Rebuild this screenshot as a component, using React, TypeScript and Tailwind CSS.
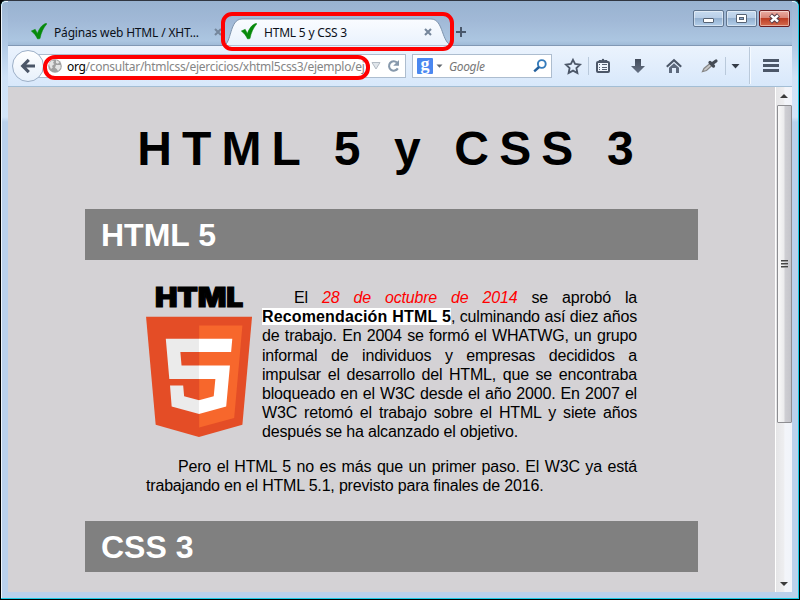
import React from "react";

function Check() {
  return (
    <svg width="16" height="17" viewBox="0 0 16 17" className="-mt-[1px] shrink-0">
      <path d="M0.3 8 L4.2 6.3 L6.4 10.4 C8.2 5.6 11 1.4 15.4 0.2 L15.8 0.9 C12.4 4.7 10.2 9.5 9 15.6 L6.6 16 C5 12.8 3 10 0.3 8Z" fill="#078a0b" stroke="#078a0b" strokeWidth="0.5" />
    </svg>
  );
}

function Cross() {
  return (
    <svg width="8" height="8" viewBox="0 0 8 8" className="shrink-0">
      <path d="M1 1L7 7M7 1L1 7" stroke="#75869b" strokeWidth="2.1" />
    </svg>
  );
}

function WindowButton({ kind }: { kind: "min" | "max" | "close" }) {
  const tone =
    kind === "close"
      ? "border-[#6b1c20] bg-[linear-gradient(#eaada4,#d88375_48%,#bd3d25_50%,#d56b4d)]"
      : "border-[#60758f] bg-[linear-gradient(#c7dbf0,#b7cde6_48%,#94b1d1_50%,#b4cfea)]";
  return (
    <div className={`flex h-[17px] w-[31px] items-center justify-center rounded-[2px] border shadow-[inset_0_0_0_1px_rgba(255,255,255,0.45)] ${tone}`}>
      <svg width="13" height="11" viewBox="0 0 13 11">
        {kind === "min" && <rect x="1.5" y="5.5" width="10" height="4" rx="0.5" fill="#fff" stroke="#566273" />}
        {kind === "max" && (
          <>
            <rect x="1.5" y="1.5" width="10" height="8" rx="0.5" fill="#fff" stroke="#566273" />
            <rect x="4.5" y="4.5" width="4" height="2" fill="#8aa6cb" stroke="#566273" />
          </>
        )}
        {kind === "close" && (
          <>
            <path d="M2.5 2L10.5 9M10.5 2L2.5 9" stroke="#563a45" strokeWidth="4.4" />
            <path d="M3 2.4L10 8.6M10 2.4L3 8.6" stroke="#fff" strokeWidth="2.6" />
          </>
        )}
      </svg>
    </div>
  );
}

function TitleBar() {
  return (
    <div className="flex h-[45px] shrink-0 items-start border-b border-[#8198b4] bg-[linear-gradient(#99b3d0,#a1b9d7_45%,#acc6e1_90%,#a0bbd8)] font-['Noto_Sans',sans-serif] text-[12px] text-[#0b1019]">
      <div className="ml-[23px] mt-[22px] flex h-[18px] w-[193px] items-center">
        <Check />
        <span className="ml-[7px] w-[160px] whitespace-nowrap pt-[2px] tracking-[-0.17px]">Páginas web HTML / XHT...</span>
        <Cross />
      </div>
      <div className="relative mt-[17px] h-[28px] w-[232px]">
        <svg className="absolute inset-0" width="232" height="28" viewBox="0 0 232 28">
          <defs>
            <linearGradient id="tab" x1="0" y1="0" x2="0" y2="1">
              <stop offset="0" stopColor="#fafcff" />
              <stop offset="1" stopColor="#e9f2fd" />
            </linearGradient>
          </defs>
          <path d="M-1 28C8 26 5 1 18 1H207C220 1 217 26 229 28Z" fill="url(#tab)" stroke="#7d93ad" />
        </svg>
        <div className="relative mt-[5px] flex h-[18px] items-center pl-[17px]">
          <Check />
          <span className="ml-[7px] w-[160px] whitespace-nowrap pt-[2px] tracking-[-0.2px]">HTML 5 y CSS 3</span>
          <Cross />
        </div>
      </div>
      <svg className="-ml-[1px] mt-[25px]" width="12" height="12" viewBox="0 0 12 12">
        <path d="M6 1V11M1 6H11" stroke="#49576b" strokeWidth="2" />
      </svg>
      <div className="ml-auto mr-[2px] mt-[9px] flex gap-[2px]">
        <WindowButton kind="min" />
        <WindowButton kind="max" />
        <WindowButton kind="close" />
      </div>
    </div>
  );
}

function UrlBox() {
  return (
    <div className="-ml-[6px] flex h-[24px] w-[368px] items-center border border-[#adbdcf] bg-white">
      <svg className="ml-[9px] shrink-0" width="14" height="14" viewBox="0 0 14 14">
        <circle cx="7" cy="7" r="6.8" fill="#a0a0a0" />
        <path d="M1 4L4 1.4L6 2L5 4L6.4 5L4 7L4.8 8.5L3 10L1.5 7Z M8 1L11.5 3L10 4.8L8 4Z M8 6L12.5 6L12.6 9L10 12L8.8 10L7 8.8Z" fill="#e4e4e4" />
      </svg>
      <span className="ml-[5px] w-[300px] shrink-0 whitespace-nowrap pt-[2px] font-['Noto_Sans',sans-serif] text-[12px] tracking-[-0.29px] text-[#858585]">
        <span className="text-black">org</span>/consultar/htmlcss/ejercicios/xhtml5css3/ejemplo/ej
      </span>
      <svg className="ml-[4px] shrink-0" width="34" height="22" viewBox="0 0 34 22">
        <path d="M1 7.5H9L5 14Z" fill="#e0e5ea" stroke="#b3bbc4" />
        <path d="M26 7.6A4.7 4.7 0 1 0 26.8 13.4" fill="none" stroke="#8799ac" strokeWidth="2.1" />
        <path d="M28 5V10.8H22.2Z" fill="#8799ac" />
      </svg>
    </div>
  );
}

function SearchBox() {
  return (
    <div className="ml-[6px] flex h-[24px] w-[140px] items-center border border-[#adbdcf] bg-white">
      <div className="ml-[4px] flex h-[16px] w-[16px] items-center justify-center rounded-[1px] bg-[#4a87f0] pb-[4px] font-['Liberation_Serif',serif] text-[18px] font-bold leading-none text-white">g</div>
      <svg className="ml-[3px]" width="7" height="4" viewBox="0 0 7 4"><path d="M0.5 0.5H6.5L3.5 3.8Z" fill="#60676f" /></svg>
      <span className="ml-[6px] pt-[2px] font-['Noto_Sans',sans-serif] text-[12px] italic tracking-[-0.35px] text-[#777]">Google</span>
      <svg className="ml-auto mr-[4px]" width="14" height="14" viewBox="0 0 14 14">
        <circle cx="8.8" cy="5" r="3.9" fill="none" stroke="#347bbb" strokeWidth="1.9" />
        <path d="M6 8L1.2 12.4" stroke="#225f9c" strokeWidth="2.4" />
      </svg>
    </div>
  );
}

function ToolIcons() {
  return (
    <svg className="ml-[10px] shrink-0" width="230" height="40" viewBox="562 46 230 40">
      <defs>
        <linearGradient id="ic" x1="0" y1="0" x2="0" y2="1">
          <stop offset="0" stopColor="#434d5c" />
          <stop offset="1" stopColor="#657184" />
        </linearGradient>
      </defs>
      <path d="M573 59.8L575.1 64L580 64.6L576.4 68L577.4 73L573 70.6L568.6 73L569.6 68L566 64.6L570.9 64Z" fill="none" stroke="#4c5768" strokeWidth="1.8" />
      <path d="M588.5 57V75M725.5 57V75" stroke="#b9c9db" />
      <path d="M749.5 47V84" stroke="#bac9da" />
      <path d="M750.5 47V84" stroke="#f5faff" />
      <rect x="597" y="62" width="12" height="10" rx="1" fill="#eef4fc" stroke="#4c5768" strokeWidth="2" />
      <path d="M599 62V60.5H601.5L603 58.9L604.5 60.5H607V62Z" fill="#4c5768" stroke="#4c5768" />
      <path d="M599 64.5H600M602 64.5H607M599 67.5H600M602 67.5H607M599 69.5H600M602 69.5H607" stroke="#566172" strokeWidth="1" />
      <path d="M635 59H641V66H645L638 73L631 66H635Z" fill="url(#ic)" />
      <path d="M666.8 66.8L674 60.2L681.2 66.8" fill="none" stroke="#4c5768" strokeWidth="2.1" />
      <path d="M669 67.8L674 63.3L679 67.8V73H676V68H672V73H669Z" fill="#5d697c" />
      <path d="M702.5 71.5L704 68.5L710.5 63L712.5 65L706.5 70.5Z" fill="#c8c8c8" stroke="#858585" strokeWidth="1.2" />
      <path d="M710 62.5L713.5 66M712.5 63.5L716 61" stroke="#454b55" strokeWidth="3.2" strokeLinecap="round" />
      <path d="M731.5 64H739.5L735.5 68.5Z" fill="#343c48" />
      <path d="M763 60.5H779M763 65.5H779M763 70.5H779" stroke="#4c5768" strokeWidth="2.8" />
    </svg>
  );
}

function Toolbar() {
  return (
    <div className="flex h-[41px] shrink-0 items-center overflow-hidden border-b border-[#a3bed5] bg-gradient-to-b from-[#ebf3fd] to-[#d8e8fb]">
      <div className="z-10 ml-[4px] flex h-[32px] w-[32px] shrink-0 items-center justify-center rounded-full border border-[#9db0c8] bg-gradient-to-b from-white to-[#e7f0fb]">
        <svg width="16" height="16" viewBox="0 0 16 16">
          <path d="M15 8H3.5M8.8 1.9L2.7 8L8.8 14.1" fill="none" stroke="#4b5667" strokeWidth="3.1" />
        </svg>
      </div>
      <UrlBox />
      <SearchBox />
      <ToolIcons />
    </div>
  );
}

function Html5Logo() {
  return (
    <svg width="106" height="152" viewBox="0 0 106 152" className="shrink-0 overflow-visible">
      <text x="9" y="21.5" textLength="88" lengthAdjust="spacingAndGlyphs" fontFamily="Inter, sans-serif" fontWeight="900" fontSize="26.5" stroke="#000" strokeWidth="1.1">HTML</text>
      <g transform="translate(-7 31.7) scale(0.235)">
        <path d="M71 460L30 0H481L440 460L255 512Z" fill="#e44d26" />
        <path d="M256 472L405 431L440 37H256Z" fill="#f7672c" />
        <path d="M256 208H181L176 150H256V94H114L129 265H256ZM256 355L192 338L188 293H132L139 382L256 414Z" fill="#ebebeb" />
        <path d="M255 208V265H325L318 338L255 355V414L371 382L387 208ZM255 94V150H392L397 94Z" fill="#fff" />
      </g>
    </svg>
  );
}

const introLines = [
  "de trabajo. En 2004 se formó el WHATWG, un grupo",
  "informal de individuos y empresas decididos a",
  "impulsar el desarrollo del HTML, que se encontraba",
  "bloqueado en el W3C desde el año 2000. En 2007 el",
  "W3C retomó el trabajo sobre el HTML y siete años",
];

function Banner({ children }: { children: React.ReactNode }) {
  return <h2 className="mx-auto h-[51px] w-[613px] bg-[#808080] pl-[16px] pt-px text-[32px] font-bold leading-[50px] text-white">{children}</h2>;
}

function Document() {
  return (
    <main className="h-[505px] min-w-0 flex-1 overflow-hidden bg-[#d4d2d5] font-['Liberation_Sans',Arial,sans-serif] text-black">
      <h1 className="mt-[34px] h-[55px] whitespace-nowrap pr-[2px] text-center text-[48px] font-bold leading-[55px] tracking-[10.15px]">HTML 5 y CSS 3</h1>
      <div className="h-[33px]" />
      <Banner>HTML 5</Banner>
      <section className="ml-[138px] mt-[25px] w-[491px] text-[16px] leading-[19.2px] tracking-[-0.18px]">
        <div className="flex h-[157px] gap-[10px]">
          <Html5Logo />
          <div className="mt-[3px] w-[375px] whitespace-nowrap">
            <div className="pl-[32px] [text-align-last:justify]">El <em className="text-[#ff0000]">28 de octubre de 2014</em> se aprobó la</div>
            <div className="[text-align-last:justify]"><strong className="bg-white tracking-[0.14px]">Recomendación HTML 5</strong>, culminando así diez años</div>
            {introLines.map((line) => (
              <div key={line} className="[text-align-last:justify]">{line}</div>
            ))}
            <div>después se ha alcanzado el objetivo.</div>
          </div>
        </div>
        <div className="mt-[15px] whitespace-nowrap">
          <div className="pl-[32px] [text-align-last:justify]">Pero el HTML 5 no es más que un primer paso. El W3C ya está</div>
          <div>trabajando en el HTML 5.1, previsto para finales de 2016.</div>
        </div>
      </section>
      <div className="h-[26px]" />
      <Banner>CSS 3</Banner>
    </main>
  );
}

function Scrollbar() {
  return (
    <div className="flex h-[505px] w-[17px] shrink-0 flex-col items-center border-l border-white bg-[linear-gradient(90deg,#e5e5e7,#eeeef0_50%,#f3f5fa_55%,#f1f4fa)]">
      <svg className="mt-[7px]" width="8" height="4" viewBox="0 0 8 4"><path d="M4 0L8 4H0Z" fill="#3c3c3c" /></svg>
      <div className="mt-[7px] flex h-[318px] w-[15px] flex-col items-center justify-center gap-[1px] rounded-[1px] border border-[#8e8e92] bg-[linear-gradient(90deg,#f9f9f9,#eaeaec_48%,#cfcfd4_52%,#c4c4ca)]">
        <div className="h-[2px] w-[7px] border-b border-[#999] bg-[#444]" />
        <div className="h-[2px] w-[7px] border-b border-[#999] bg-[#444]" />
        <div className="h-[2px] w-[7px] border-b border-[#999] bg-[#444]" />
      </div>
      <svg className="mb-[6px] mt-auto" width="8" height="4" viewBox="0 0 8 4"><path d="M0 0H8L4 4Z" fill="#3c3c3c" /></svg>
    </div>
  );
}

export default function App() {
  return (
    <div className="relative h-[600px] w-[800px] overflow-hidden bg-black">
      <div className="h-[600px] rounded-t-[6px] border border-t-[#303640] border-b-black border-l-black border-r-black bg-[#18cae4] pb-px pr-px">
        <div className="h-[597px] rounded-t-[5px] border-l border-t border-[#edf5fc] bg-[linear-gradient(#9cb5d2,#b0c9e5_42px,#cfe2f7_75px,#d3e5f8_115px,#bad1ec_120px,#bad1ec)] pl-[6px] pr-[6px]">
          <div className="-mt-[2px]">
            <div className="pt-px"><TitleBar /></div>
            <Toolbar />
            <div className="flex">
              <Document />
              <Scrollbar />
            </div>
          </div>
        </div>
      </div>
      <div className="absolute left-[221px] top-[12px] z-20 h-[39px] w-[233px] rounded-[11px] border-4 border-[#ff0000]" />
      <div className="absolute left-[43px] top-[55px] z-20 h-[25px] w-[327px] rounded-[12px] border-4 border-[#ff0000]" />
    </div>
  );
}
